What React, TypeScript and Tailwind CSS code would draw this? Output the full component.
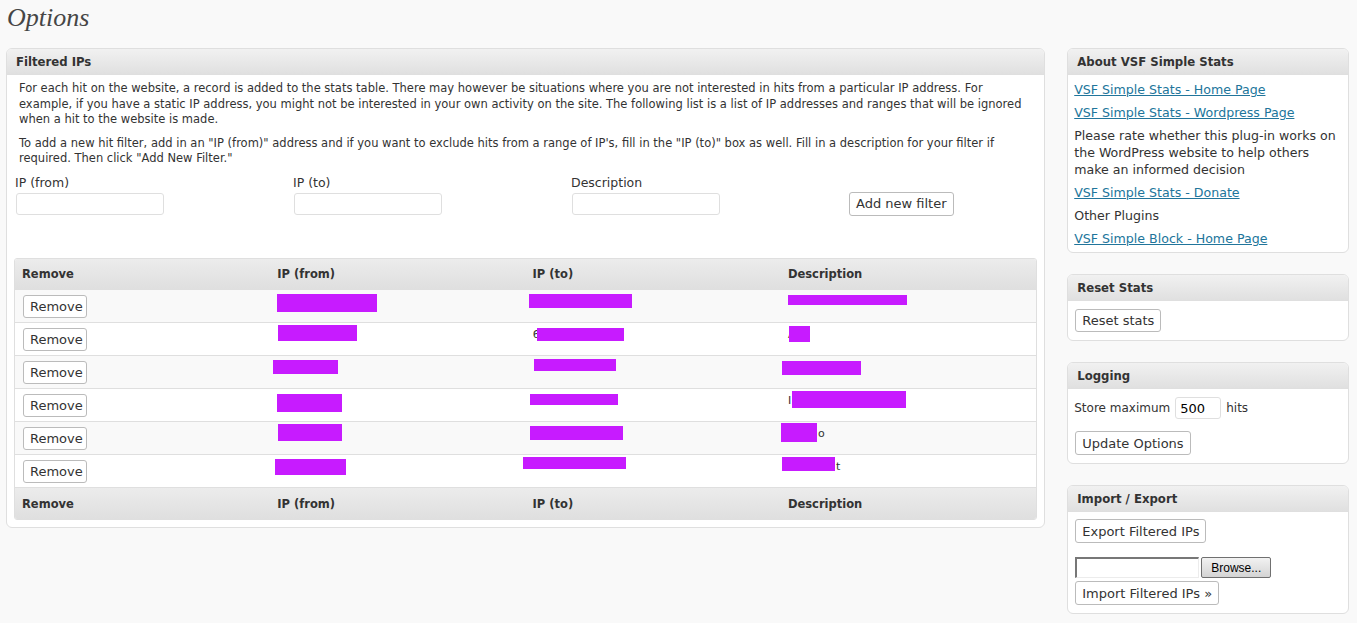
import React from "react";

type Mark = { l: number; t: number; w: number; h: number };
type Cell = { marks: Mark[]; text?: string; tl?: number };

const rows: Cell[][] = [
  [
    { marks: [{ l: 7, t: 4, w: 100, h: 18 }] },
    { marks: [{ l: 3, t: 4, w: 103, h: 14 }] },
    { marks: [{ l: 7, t: 5, w: 119, h: 10 }] },
  ],
  [
    { marks: [{ l: 8, t: 2, w: 79, h: 16 }] },
    { marks: [{ l: 11, t: 5, w: 87, h: 13 }], text: "6", tl: 7 },
    { marks: [{ l: 8, t: 3, w: 21, h: 16 }], text: "A", tl: 7 },
  ],
  [
    { marks: [{ l: 3, t: 4, w: 65, h: 14 }] },
    { marks: [{ l: 8, t: 3, w: 82, h: 12 }] },
    { marks: [{ l: 1, t: 5, w: 79, h: 14 }] },
  ],
  [
    { marks: [{ l: 7, t: 5, w: 65, h: 18 }] },
    { marks: [{ l: 4, t: 5, w: 88, h: 11 }] },
    { marks: [{ l: 11, t: 2, w: 114, h: 17 }], text: "I", tl: 7 },
  ],
  [
    { marks: [{ l: 8, t: 2, w: 64, h: 17 }] },
    { marks: [{ l: 4, t: 4, w: 93, h: 14 }] },
    { marks: [{ l: 0, t: 1, w: 36, h: 19 }], text: "o", tl: 37 },
  ],
  [
    { marks: [{ l: 5, t: 4, w: 71, h: 16 }] },
    { marks: [{ l: -3, t: 2, w: 103, h: 12 }] },
    { marks: [{ l: 1, t: 2, w: 53, h: 14 }], text: "t", tl: 55 },
  ],
];

const btn =
  "h-[23px] px-[6px] rounded-[3px] border border-[#bbbbbb] bg-white text-[13px] text-[#333] leading-none";
const head = "font-['DejaVu_Sans_Condensed','DejaVu_Sans',sans-serif] font-bold";

function Redacted({ cell }: { cell: Cell }) {
  return (
    <div className="relative w-[256px] h-full">
      {cell.text && (
        <span className="absolute top-[4px] text-[11px] text-[#333]" style={{ left: cell.tl }}>
          {cell.text}
        </span>
      )}
      {cell.marks.map((m, i) => (
        <span
          key={i}
          className="absolute bg-[#c71bff]"
          style={{ left: m.l, top: m.t, width: m.w, height: m.h }}
        />
      ))}
    </div>
  );
}

function HeadRow({ tall }: { tall?: boolean }) {
  return (
    <div
      className={`flex ${tall ? "h-[31px]" : "h-[30px]"} items-center pt-[3px] bg-gradient-to-b from-[#ececec] to-[#dfdfdf] text-[11.5px] font-bold text-[#333]`}
    >
      <div className="w-[256px] pl-[7px]">Remove</div>
      <div className="w-[256px] pl-[7px]">IP (from)</div>
      <div className="w-[256px] pl-[7px]">IP (to)</div>
      <div className="w-[256px] pl-[7px]">Description</div>
    </div>
  );
}

function Box({ title, children }: { title: string; children: React.ReactNode }) {
  return (
    <div className="rounded-[6px] border border-[#dfdfdf] bg-white overflow-hidden">
      <div className={`h-[26px] flex items-center px-[9px] bg-gradient-to-b from-[#f1f1f1] to-[#e0e0e0] border-b border-[#dfdfdf] text-[13px] text-[#333] ${head}`}>
        {title}
      </div>
      {children}
    </div>
  );
}

export default function App() {
  return (
    <div className="min-h-[623px] bg-[#f9f9f9] pl-[6px] pr-[8px] text-[#333] font-['DejaVu_Sans','Liberation_Sans',sans-serif]">
      <h2 className="h-[48px] pl-[1px] text-[26px] leading-[36px] italic text-[#464646] font-['Liberation_Serif',serif]">
        Options
      </h2>
      <div className="flex items-start gap-[22px]">
        <div className="w-[1040px] rounded-[6px] border border-[#dfdfdf] bg-white overflow-hidden">
          <div className={`h-[26px] flex items-center px-[9px] bg-gradient-to-b from-[#f1f1f1] to-[#e0e0e0] border-b border-[#dfdfdf] text-[13px] text-[#333] ${head}`}>
            Filtered IPs
          </div>
          <div className="px-[12px] pt-[6px] text-[11.5px] leading-[15.5px] text-[#333] whitespace-nowrap">
            <p>
              For each hit on the website, a record is added to the stats table. There may however be situations where you are not interested in hits from a particular IP address. For
              <br />
              example, if you have a static IP address, you might not be interested in your own activity on the site. The following list is a list of IP addresses and ranges that will be ignored
              <br />
              when a hit to the website is made.
            </p>
            <p className="mt-[8px]">
              To add a new hit filter, add in an "IP (from)" address and if you want to exclude hits from a range of IP's, fill in the "IP (to)" box as well. Fill in a description for your filter if
              <br />
              required. Then click "Add New Filter."
            </p>
          </div>
          <div className="flex pl-[8px] pt-[8px] text-[12.5px]">
            {["IP (from)", "IP (to)", "Description"].map((l) => (
              <div key={l} className="w-[278px] flex flex-col">
                <span className="leading-[16px] h-[17px]">{l}</span>
                <input className="mt-[1px] ml-[1px] w-[148px] h-[22px] rounded-[3px] border border-[#dfdfdf] bg-white" />
              </div>
            ))}
            <div className="pt-[17px]">
              <button className={`${btn} h-[24px] px-[5px]`}>Add new filter</button>
            </div>
          </div>
          <div className="px-[7px] pt-[42px] pb-[7px]">
            <div className="rounded-[3px] border border-[#dfdfdf] overflow-hidden">
              <HeadRow />
              {rows.map((r, i) => (
                <div
                  key={i}
                  className={`flex h-[33px] border-t border-[#dfdfdf] ${i % 2 === 0 ? "bg-[#f9f9f9]" : "bg-white"}`}
                >
                  <div className="w-[256px] pl-[8px] pt-[4px]">
                    <button className={`${btn} w-[64px] px-0`}>Remove</button>
                  </div>
                  {r.map((c, j) => (
                    <Redacted key={j} cell={c} />
                  ))}
                </div>
              ))}
              <div className="border-t border-[#dfdfdf]">
                <HeadRow tall />
              </div>
            </div>
          </div>
        </div>

        <div className="w-[282px] flex flex-col gap-[21px]">
          <Box title="About VSF Simple Stats">
            <div className="flex flex-col gap-[6px] pl-[6px] pr-[2px] pt-[6px] pb-[5px] text-[12.6px] leading-[17px]">
              <a className="text-[#21759b] underline" href="#">VSF Simple Stats - Home Page</a>
              <a className="text-[#21759b] underline" href="#">VSF Simple Stats - Wordpress Page</a>
              <p>Please rate whether this plug-in works on the WordPress website to help others make an informed decision</p>
              <a className="text-[#21759b] underline" href="#">VSF Simple Stats - Donate</a>
              <p>Other Plugins</p>
              <a className="text-[#21759b] underline" href="#">VSF Simple Block - Home Page</a>
            </div>
          </Box>
          <Box title="Reset Stats">
            <div className="px-[7px] pt-[7px] pb-[8px]">
              <button className={btn}>Reset stats</button>
            </div>
          </Box>
          <Box title="Logging">
            <div className="px-[6px] pt-[8px] pb-[8px] text-[12px]">
              <div className="flex items-center gap-[5px]">
                <span>Store maximum</span>
                <input
                  defaultValue="500"
                  className="w-[46px] h-[22px] rounded-[3px] border border-[#dfdfdf] px-[4px] text-[13px] text-black"
                />
                <span>hits</span>
              </div>
              <button className={`${btn} mt-[12px] ml-[1px] h-[24px]`}>Update Options</button>
            </div>
          </Box>
          <Box title="Import / Export">
            <div className="px-[7px] pt-[7px] pb-[8px] text-[13px]">
              <button className={`${btn} h-[24px]`}>Export Filtered IPs</button>
              <div className="flex mt-[14px]">
                <div className="w-[124px] h-[21px] border border-[#ececec] border-t-[2px] border-l-[2px] border-t-[#777] border-l-[#777] bg-white" />
                <button className="ml-[2px] w-[70px] h-[21px] rounded-[2px] border border-[#707070] bg-gradient-to-b from-[#f2f2f2] to-[#d4d4d4] text-[12px] text-black font-['Liberation_Sans',sans-serif] leading-none">
                  Browse...
                </button>
              </div>
              <button className={`${btn} mt-[3px] h-[24px]`}>Import Filtered IPs »</button>
            </div>
          </Box>
        </div>
      </div>
    </div>
  );
}
